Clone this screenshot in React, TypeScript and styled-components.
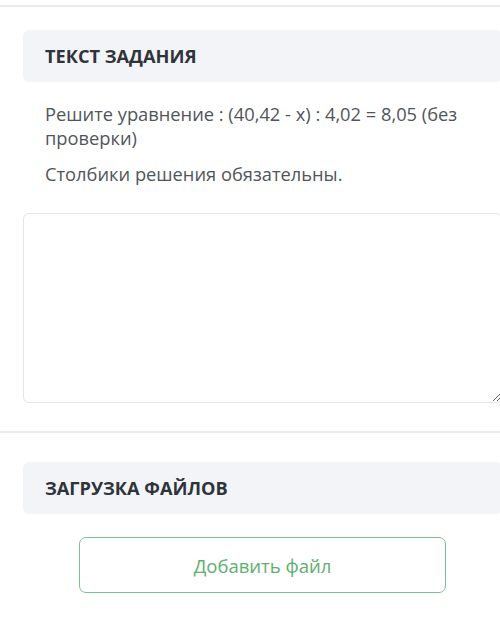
import React from "react";
import styled, { createGlobalStyle } from "styled-components";

const GlobalStyle = createGlobalStyle`
  html, body {
    margin: 0;
    padding: 0;
    background: #ffffff;
    overflow: hidden;
  }
  body {
    font-family: "Open Sans", "Noto Sans", sans-serif;
    width: 500px;
    height: 624px;
  }
`;

const Page = styled.div`
  width: 500px;
  height: 624px;
  overflow: hidden;
  padding-top: 5px;
  box-sizing: border-box;
`;

const Divider = styled.div`
  height: 2px;
  background: #ebebeb;
  width: 100%;
`;

const Section = styled.section<{ $top: number; $bottom: number }>`
  margin-left: 23px;
  width: 479px;
  padding-top: ${(p) => p.$top}px;
  padding-bottom: ${(p) => p.$bottom}px;
  display: flex;
  flex-direction: column;
`;

const SectionHeader = styled.div`
  height: 52px;
  background: #f3f4f8;
  border-radius: 6px;
  display: flex;
  align-items: center;
  padding-left: 22px;
  font-size: 18.2px;
  font-weight: 700;
  color: #2f333a;
`;

const TaskText = styled.div`
  padding: 20px 22px 0;
  color: #50555b;
  font-size: 18.3px;
  line-height: 24px;
`;

const Paragraph = styled.p`
  margin: 0 0 12px;
`;

const Answer = styled.textarea`
  margin-top: 15px;
  height: 190px;
  border: 1px solid #e5e5e5;
  border-radius: 6px;
  box-sizing: border-box;
  width: 100%;
  resize: both;
  outline: none;
  font: inherit;
`;

const UploadButton = styled.button`
  align-self: center;
  margin-top: 23px;
  width: 367px;
  height: 56px;
  background: #ffffff;
  border: 1px solid #7cc18b;
  border-radius: 7px;
  color: #5eae6f;
  font-family: "Open Sans", "Noto Sans", sans-serif;
  font-size: 18.5px;
  cursor: pointer;
`;

export default function App() {
  return (
    <Page>
      <GlobalStyle />
      <Divider />
      <Section $top={23} $bottom={28}>
        <SectionHeader>ТЕКСТ ЗАДАНИЯ</SectionHeader>
        <TaskText>
          <Paragraph>
            Решите уравнение : (40,42 - x) : 4,02 = 8,05 (без проверки)
          </Paragraph>
          <Paragraph>Столбики решения обязательны.</Paragraph>
        </TaskText>
        <Answer />
      </Section>
      <Divider />
      <Section $top={29} $bottom={0}>
        <SectionHeader>ЗАГРУЗКА ФАЙЛОВ</SectionHeader>
        <UploadButton>Добавить файл</UploadButton>
      </Section>
    </Page>
  );
}
